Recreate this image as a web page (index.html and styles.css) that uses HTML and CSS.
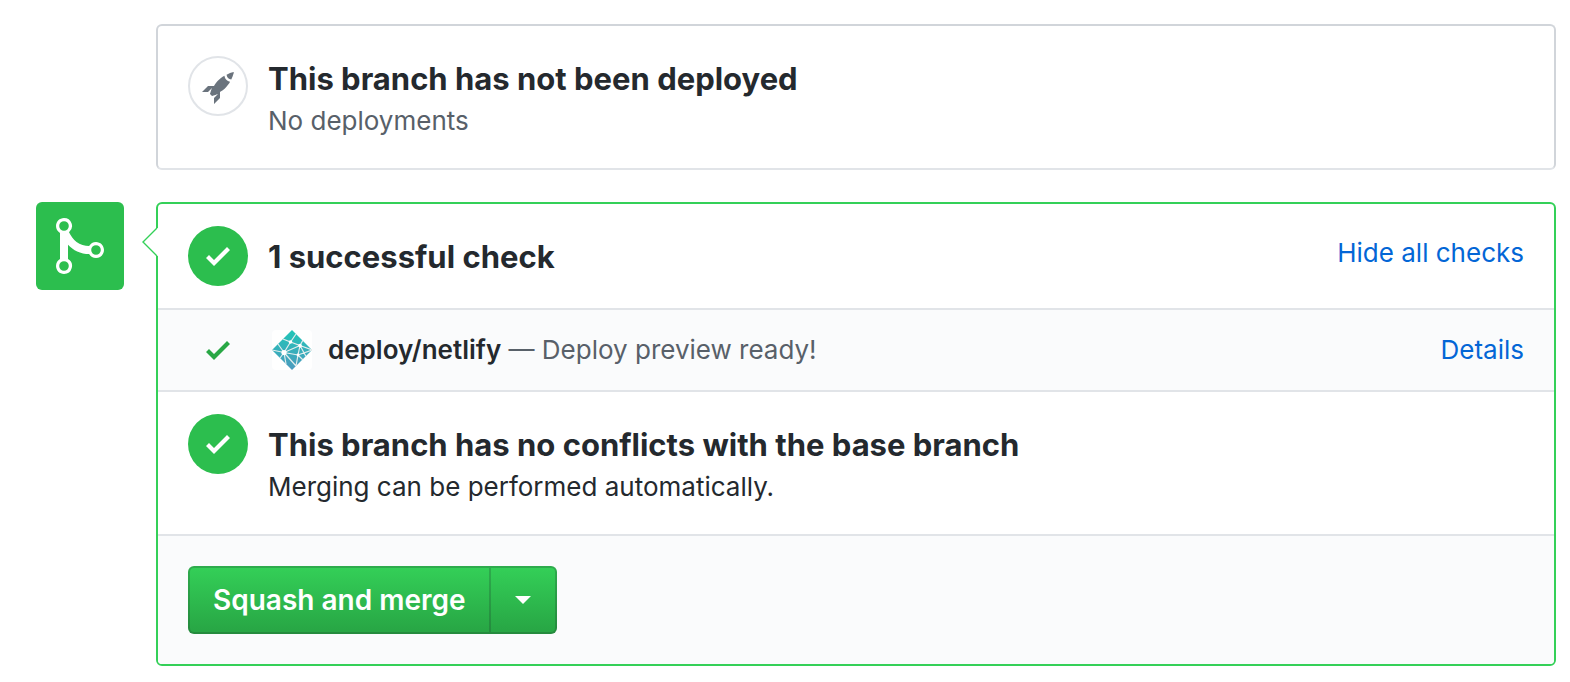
FILE: index.html
```html
<!DOCTYPE html>
<html lang="en">
<head>
<meta charset="utf-8">
<title>Merge status</title>
<link rel="stylesheet" href="styles.css">
</head>
<body>
<svg class="symbols" aria-hidden="true">
  <symbol id="check" viewBox="0 0 12 16"><path d="M12 5l-8 8-4-4 1.5-1.5L4 10l6.5-6.5L12 5z"/></symbol>
</svg>
<main class="page">
  <section class="card deploy">
    <div class="row">
      <span class="status status-outline">
        <svg class="rocket" viewBox="0 0 16 16" aria-hidden="true"><path d="M12.17 3.83c-.27-.27-.47-.55-.63-.88-.16-.31-.27-.66-.34-1.02-.58.33-1.16.7-1.73 1.13-.58.44-1.14.94-1.69 1.48-.7.7-1.33 1.81-1.78 2.45H3L0 10h3l2-2c-.34.77-1.02 2.98-1 3l1 1c.02.02 2.23-.64 3-.98l-2 2v3l3-3v-3c.64-.45 1.75-1.09 2.45-1.78.55-.55 1.05-1.13 1.47-1.7.44-.58.81-1.16 1.14-1.72-.36-.08-.7-.19-1.03-.34a3.39 3.39 0 0 1-.86-.65zM16 0s-.09.38-.3 1.06c-.2.7-.55 1.58-1.06 2.66-.7-.08-1.27-.33-1.66-.72-.39-.39-.63-.94-.7-1.64C13.36.84 14.23.48 14.92.28 15.62.08 16 0 16 0z"/></svg>
      </span>
      <div class="text">
        <h2 class="heading">This branch has not been deployed</h2>
        <p class="note muted">No deployments</p>
      </div>
    </div>
  </section>

  <div class="merge">
    <div class="badge">
      <svg class="merge-icon" viewBox="0 0 12 16" aria-hidden="true"><path fill-rule="evenodd" d="M10 7c-.73 0-1.38.41-1.73 1.02V8C7.22 7.98 6 7.64 5.14 6.98c-.75-.58-1.5-1.61-1.89-2.44A1.993 1.993 0 0 0 2 .99C.89.99 0 1.89 0 3a2 2 0 0 0 1 1.72v6.56c-.59.35-1 .99-1 1.72 0 1.11.89 2 2 2a1.993 1.993 0 0 0 1-3.72V7.67c.67.7 1.44 1.27 2.3 1.69.86.42 2.03.63 2.97.64v-.02c.36.61 1 1.02 1.73 1.02 1.11 0 2-.89 2-2 0-1.11-.89-2-2-2zM3.2 13a1.2 1.2 0 1 1-2.4 0 1.2 1.2 0 0 1 2.4 0zm0-10a1.2 1.2 0 1 1-2.4 0 1.2 1.2 0 0 1 2.4 0zm8 6a1.2 1.2 0 1 1-2.4 0 1.2 1.2 0 0 1 2.4 0z"/></svg>
    </div>
    <section class="card panel">
      <svg class="pointer" viewBox="0 0 16 28" aria-hidden="true"><path class="pointer-fill" d="M15 0h1v28h-1L1 14z"/><path class="pointer-line" d="M15 0L1 14l14 14"/></svg>
      <div class="row">
        <span class="status status-ok"><svg class="check" aria-hidden="true"><use href="#check"/></svg></span>
        <div class="text"><h2 class="heading">1 successful check</h2></div>
        <a class="link toggle" href="#checks">Hide all checks</a>
      </div>
      <div class="check-row" id="checks">
        <span class="check-cell"><svg class="check" aria-hidden="true"><use href="#check"/></svg></span>
        <svg class="avatar" viewBox="0 0 40 40" role="img" aria-label="Netlify">
          <defs><linearGradient id="teal" x1="0" y1="0" x2="0" y2="1"><stop offset="0" stop-color="#20c6b7"/><stop offset="1" stop-color="#4d9abf"/></linearGradient></defs>
          <rect width="40" height="40" rx="4" fill="#fff"/>
          <path d="M20 0l20 20-20 20L0 20z" fill="url(#teal)"/>
          <g fill="none" stroke="#e4eded" stroke-width="1.2">
            <path d="M11 9l7.500 3L24 4M18.500 12L28 15.500 31 10M28 15.500L40 20M18.500 12L12 22.500M12 22.500L28 15.500M12 22.500L26 25 40 20M28 15.500L26 25 24 36M12 22.500L24 36M12 22.500L0 20M12 22.500L6 14M12 22.500L8 28M12 22.500L14 34M26 25l5 5M28 15.500l6 11"/>
          </g>
          <g fill="#fff"><circle cx="12" cy="22.500" r="2.600"/><circle cx="18.500" cy="12" r="1.800"/><circle cx="28" cy="15.500" r="1.800"/><circle cx="26" cy="25" r="1.400"/></g>
        </svg>
        <p class="check-text muted"><strong class="check-name">deploy/netlify</strong> — Deploy preview ready!</p>
        <a class="link" href="#details">Details</a>
      </div>
      <div class="row">
        <span class="status status-ok"><svg class="check" aria-hidden="true"><use href="#check"/></svg></span>
        <div class="text">
          <h2 class="heading">This branch has no conflicts with the base branch</h2>
          <p class="note">Merging can be performed automatically.</p>
        </div>
      </div>
      <div class="actions">
        <button class="btn btn-main" type="button">Squash and merge</button>
        <button class="btn btn-menu" type="button" aria-label="Select merge method"><span class="caret"></span></button>
      </div>
    </section>
  </div>
</main>
</body>
</html>
```
FILE: styles.css
```css
* { box-sizing: border-box; }

body {
  margin: 0;
  background: #fff;
  color: #24292e;
  font: 26px/40px Inter, "Liberation Sans", sans-serif;
}

h2, p { margin: 0; }

.symbols { position: absolute; width: 0; height: 0; }

.page {
  display: flex;
  flex-direction: column;
  gap: 32px;
  padding: 24px 14px 16px 36px;
}

.card {
  border: 2px solid #d1d5da;
  border-radius: 6px;
  background: #fff;
}

.deploy { margin-left: 120px; border-bottom-color: #e1e4e8; }
.deploy .row { padding-top: 30px; }
.deploy .text { padding-top: 1px; }

.merge { display: flex; align-items: flex-start; gap: 32px; }

.badge {
  display: flex;
  align-items: center;
  justify-content: center;
  flex: none;
  width: 88px;
  height: 88px;
  border-radius: 6px;
  background: #2cbe4e;
}

.merge-icon { width: 48px; height: 64px; fill: #fff; }

.panel { position: relative; flex: 1; min-width: 0; border-color: #34d058; }

.pointer { position: absolute; top: 24px; left: -16px; width: 16px; height: 28px; }
.pointer-fill { fill: #fff; }
.pointer-line { fill: none; stroke: #34d058; stroke-width: 1.4; }

.row {
  display: flex;
  align-items: flex-start;
  gap: 20px;
  padding: 22px 30px;
}

.panel .row { border-bottom: 2px solid #e1e4e8; }

.status {
  display: flex;
  align-items: center;
  justify-content: center;
  flex: none;
  width: 60px;
  height: 60px;
  border-radius: 50%;
}

.status-outline { padding-top: 3px; border: 2px solid #e1e4e8; fill: #6a737d; }
.status-ok { background: #2cbe4e; fill: #fff; }
.rocket { width: 32px; height: 32px; }
.check { width: 24px; height: 32px; }

.text { flex: 1; min-width: 0; padding-top: 9px; }
.heading { font-size: 31px; line-height: 44px; font-weight: 700; }
.note { padding-bottom: 5px; }
.muted { color: #586069; }

.link { color: #0366d6; text-decoration: none; white-space: nowrap; }
.link:hover { text-decoration: underline; }
.toggle { margin-top: 7px; }

.check-row {
  display: flex;
  align-items: center;
  height: 82px;
  padding: 0 30px;
  border-bottom: 2px solid #e1e4e8;
  background: #fafbfc;
}

.check-cell { display: flex; justify-content: center; width: 60px; fill: #28a745; }
.avatar { width: 40px; height: 40px; margin: 0 16px 0 24px; }
.check-text { flex: 1; }
.check-name { color: #24292e; font-weight: 600; }

.actions {
  display: flex;
  padding: 30px;
  border-radius: 0 0 4px 4px;
  background: #fafbfc;
}

.btn {
  height: 68px;
  margin: 0;
  border: 2px solid rgba(27, 31, 35, 0.2);
  background: #28a745 linear-gradient(#34d058, #28a745 90%) -2px -2px / 110% 110% repeat-x;
  color: #fff;
  font: 600 28px/40px Inter, "Liberation Sans", sans-serif;
  cursor: pointer;
}

.btn-main { padding: 0 23px; border-right: 0; border-radius: 6px 0 0 6px; }
.btn-menu { padding: 0 24px; border-radius: 0 6px 6px 0; }

.caret {
  display: block;
  border: 8px solid transparent;
  border-top-color: #fff;
  border-bottom: 0;
}
```
